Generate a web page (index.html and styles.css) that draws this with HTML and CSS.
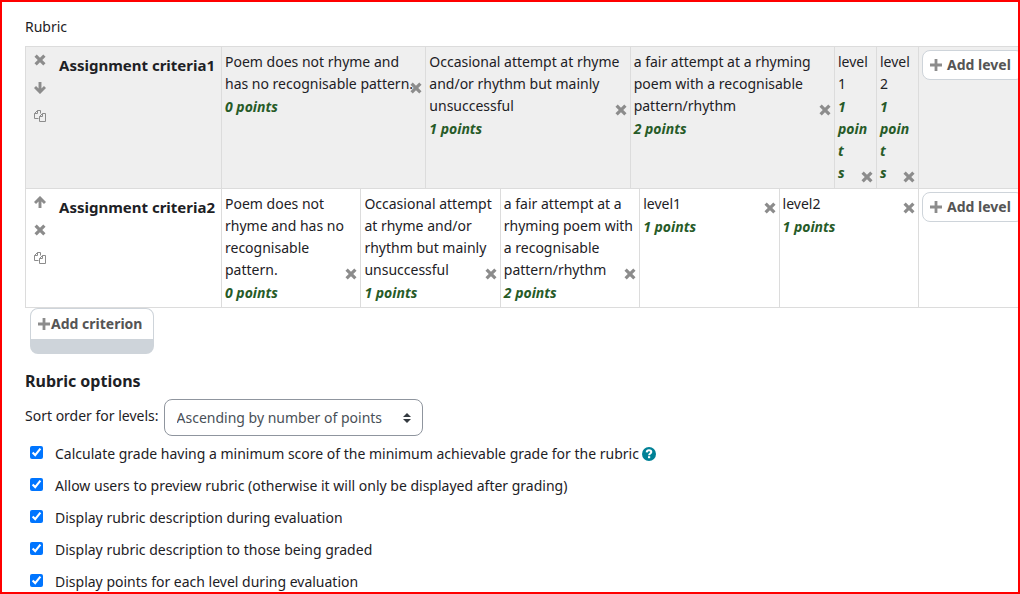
FILE: index.html
```html
<!DOCTYPE html>
<html lang="en">
<head>
<meta charset="utf-8">
<title>Rubric</title>
<link rel="stylesheet" href="styles.css">
</head>
<body>
<svg class="sprite" aria-hidden="true">
  <symbol id="times" viewBox="0 0 12 12"><path d="M1.600 1.600l8.800 8.800M10.400 1.600l-8.800 8.800" fill="none" stroke="currentColor" stroke-width="3.200"/></symbol>
  <symbol id="down" viewBox="0 0 12 12"><path d="M6 0v10M1 5l5 5 5-5" fill="none" stroke="currentColor" stroke-width="2.900"/></symbol>
  <symbol id="up" viewBox="0 0 12 12"><path d="M6 12V2M1 7l5-5 5 5" fill="none" stroke="currentColor" stroke-width="2.900"/></symbol>
  <symbol id="copy" viewBox="0 0 12 12"><path d="M4.500 8.500h-4v-5l3-3h3v3M3.500.5v3h-3M8.500 3.500h3v8h-6v-5zM8.500 3.500v3h-3" fill="none" stroke="currentColor"/></symbol>
  <symbol id="plus" viewBox="0 0 12 12"><path d="M6 0v12M0 6h12" fill="none" stroke="currentColor" stroke-width="2.800"/></symbol>
</svg>
<main class="page">
  <div class="label">Rubric</div>
  <table class="criterion shaded">
    <tr>
      <th class="head" scope="row">
        <div class="head-inner">
          <div class="tools">
            <button class="icon-btn" aria-label="Delete criterion"><svg><use href="#times"/></svg></button>
            <button class="icon-btn" aria-label="Move down"><svg><use href="#down"/></svg></button>
            <button class="icon-btn" aria-label="Duplicate criterion"><svg><use href="#copy"/></svg></button>
          </div>
          <span class="name">Assignment criteria1</span>
        </div>
      </th>
      <td><div class="definition">Poem does not rhyme and has no recognisable pattern.<button class="icon-btn delete" aria-label="Delete level"><svg><use href="#times"/></svg></button></div><div class="points">0 points</div></td>
      <td><div class="definition">Occasional attempt at rhyme and/or rhythm but mainly unsuccessful<button class="icon-btn delete" aria-label="Delete level"><svg><use href="#times"/></svg></button></div><div class="points">1 points</div></td>
      <td><div class="definition">a fair attempt at a rhyming poem with a recognisable pattern/rhythm<button class="icon-btn delete" aria-label="Delete level"><svg><use href="#times"/></svg></button></div><div class="points">2 points</div></td>
      <td class="narrow"><div class="definition">level<br>1<div class="points">1<br>poin<br>t<br>s</div><button class="icon-btn delete" aria-label="Delete level"><svg><use href="#times"/></svg></button></div></td>
      <td class="narrow"><div class="definition">level<br>2<div class="points">1<br>poin<br>t<br>s</div><button class="icon-btn delete" aria-label="Delete level"><svg><use href="#times"/></svg></button></div></td>
      <td class="add"><button class="add-level"><svg><use href="#plus"/></svg>Add level</button></td>
    </tr>
  </table>
  <table class="criterion">
    <tr>
      <th class="head" scope="row">
        <div class="head-inner">
          <div class="tools">
            <button class="icon-btn" aria-label="Move up"><svg><use href="#up"/></svg></button>
            <button class="icon-btn" aria-label="Delete criterion"><svg><use href="#times"/></svg></button>
            <button class="icon-btn" aria-label="Duplicate criterion"><svg><use href="#copy"/></svg></button>
          </div>
          <span class="name">Assignment criteria2</span>
        </div>
      </th>
      <td><div class="definition">Poem does not rhyme and has no recognisable pattern.<button class="icon-btn delete" aria-label="Delete level"><svg><use href="#times"/></svg></button></div><div class="points">0 points</div></td>
      <td><div class="definition">Occasional attempt at rhyme and/or rhythm but mainly unsuccessful<button class="icon-btn delete" aria-label="Delete level"><svg><use href="#times"/></svg></button></div><div class="points">1 points</div></td>
      <td><div class="definition">a fair attempt at a rhyming poem with a recognisable pattern/rhythm<button class="icon-btn delete" aria-label="Delete level"><svg><use href="#times"/></svg></button></div><div class="points">2 points</div></td>
      <td><div class="definition">level1<button class="icon-btn delete" aria-label="Delete level"><svg><use href="#times"/></svg></button></div><div class="points">1 points</div></td>
      <td><div class="definition">level2<button class="icon-btn delete" aria-label="Delete level"><svg><use href="#times"/></svg></button></div><div class="points">1 points</div></td>
      <td class="add"><button class="add-level"><svg><use href="#plus"/></svg>Add level</button></td>
    </tr>
  </table>
  <button class="add-criterion"><svg><use href="#plus"/></svg>Add criterion</button>

  <h2 class="options-title">Rubric options</h2>
  <div class="sort">
    <label for="sort">Sort order for levels:</label>
    <span class="select-wrap">
      <select id="sort" class="select"><option>Ascending by number of points</option></select>
      <svg class="caret" viewBox="0 0 8 10" aria-hidden="true"><path d="M4 0l4 4H0zM4 10L0 6h8z" fill="#343a40"/></svg>
    </span>
  </div>
  <div class="option">
    <input type="checkbox" id="o1" checked><label for="o1">Calculate grade having a minimum score of the minimum achievable grade for the rubric</label>
    <button class="help" aria-label="Help"><svg viewBox="0 0 14 14"><circle cx="7" cy="7" r="7" fill="#008196"/><path d="M4.700 5.400C4.800 3.800 5.800 3.300 7 3.300c1.300 0 2.300.7 2.300 1.800C9.300 6.600 7.200 6.500 7.100 8.200" fill="none" stroke="#fff" stroke-width="2"/><path d="M6 9.200h2.200v2H6z" fill="#fff"/></svg></button>
  </div>
  <div class="option"><input type="checkbox" id="o2" checked><label for="o2">Allow users to preview rubric (otherwise it will only be displayed after grading)</label></div>
  <div class="option"><input type="checkbox" id="o3" checked><label for="o3">Display rubric description during evaluation</label></div>
  <div class="option"><input type="checkbox" id="o4" checked><label for="o4">Display rubric description to those being graded</label></div>
  <div class="option"><input type="checkbox" id="o5" checked><label for="o5">Display points for each level during evaluation</label></div>
</main>
</body>
</html>
```
FILE: styles.css
```css
* { box-sizing: border-box; }
body {
  margin: 0;
  font: 14px/22px "Noto Sans", "Open Sans", sans-serif;
  color: #1d2125;
  background: #fff;
}
button, select { font: inherit; color: inherit; }
.sprite { display: none; }
.page {
  height: 100vh;
  overflow: hidden;
  border: 2px solid #f00;
  padding: 14px 0 0 23px;
}
.label { margin-bottom: 8px; }
.criterion {
  width: 100%;
  table-layout: fixed;
  border-spacing: 0;
  border: 1px solid #dcdcdc;
  border-right: 0;
}
.criterion + .criterion { border-top: 0; }
.shaded { background: #efefef; }
.criterion td, .criterion th {
  padding: 4px 3px 3px;
  vertical-align: top;
  text-align: left;
}
.shaded td { padding-bottom: 4px; }
.criterion td { border-left: 1px solid #dcdcdc; }
.criterion .head { width: 195px; padding: 0 0 0 7px; }
.criterion .narrow { width: 42px; }
.criterion .add { width: 100px; padding-top: 3px; }
.head-inner { display: flex; gap: 12px; }
.tools { display: flex; flex-direction: column; gap: 14px; padding-top: 6px; }
.name { padding-top: 7px; white-space: nowrap; font-size: 15px; }
.icon-btn {
  display: block;
  width: 14px;
  height: 14px;
  padding: 1px;
  border: 0;
  background: none;
  color: #8c8c8c;
}
.icon-btn svg, .add-level svg, .add-criterion svg { display: block; width: 12px; height: 12px; color: #8c8c8c; }
.definition { position: relative; }
.delete { position: absolute; right: -1px; bottom: 0; }
.points { padding-top: 1px; color: #275b28; font-weight: 700; font-style: italic; }
.add-level {
  display: flex;
  align-items: center;
  gap: 5px;
  height: 30px;
  padding: 0 12px 0 7px;
  border: 1px solid #ced4da;
  border-radius: 8px;
  background: #fff;
  color: #555;
  font-weight: 700;
  white-space: nowrap;
}
.add-criterion {
  display: flex;
  align-items: center;
  gap: 1px;
  margin-left: 5px;
  height: 46px;
  padding: 0 11px 0 7px;
  border: 1px solid #ced4da;
  border-bottom-width: 15px;
  border-radius: 8px;
  background: #fff;
  color: #555;
  font-weight: 700;
}
.options-title { margin: 16px 0 7px; font-size: 16px; line-height: 22px; }
.sort { display: flex; gap: 5px; margin-bottom: 7px; }
.sort label { padding-top: 6px; }
.select-wrap { position: relative; }
.select {
  appearance: none;
  height: 37px;
  padding: 0 39px 0 12px;
  border: 1px solid #8f959e;
  border-radius: 8px;
  background: #fff;
  color: #495057;
}
.caret { position: absolute; right: 12px; top: 14px; width: 8px; height: 10px; pointer-events: none; }
.option { display: flex; align-items: center; height: 22px; margin-bottom: 10px; }
.option input { width: 13px; height: 13px; margin: 0 12px 3px 5px; }
.help { width: 14px; height: 14px; margin-left: 3px; padding: 0; border: 0; background: none; }
.help svg { display: block; width: 14px; height: 14px; }
```
